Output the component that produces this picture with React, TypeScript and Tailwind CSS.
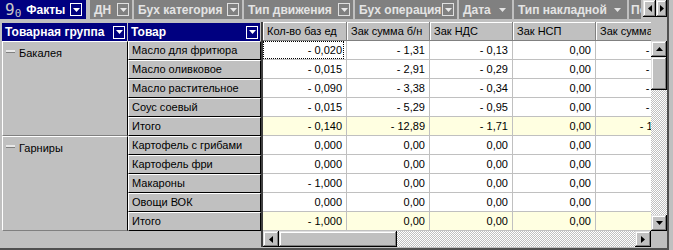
import React from "react";

type Row = { name: string; vals: string[]; total?: boolean };
type Group = { name: string; rows: Row[] };

const groups: Group[] = [
  {
    name: "Бакалея",
    rows: [
      { name: "Масло для фритюра", vals: ["- 0,020", "- 1,31", "- 0,13", "0,00", "- 1,44"] },
      { name: "Масло оливковое", vals: ["- 0,015", "- 2,91", "- 0,29", "0,00", "- 3,20"] },
      { name: "Масло растительное", vals: ["- 0,090", "- 3,38", "- 0,34", "0,00", "- 3,72"] },
      { name: "Соус соевый", vals: ["- 0,015", "- 5,29", "- 0,95", "0,00", "- 6,24"] },
      { name: "Итого", vals: ["- 0,140", "- 12,89", "- 1,71", "0,00", "- 14,60"], total: true },
    ],
  },
  {
    name: "Гарниры",
    rows: [
      { name: "Картофель с грибами", vals: ["0,000", "0,00", "0,00", "0,00", "0,00"] },
      { name: "Картофель фри", vals: ["0,000", "0,00", "0,00", "0,00", "0,00"] },
      { name: "Макароны", vals: ["- 1,000", "0,00", "0,00", "0,00", "0,00"] },
      { name: "Овощи ВОК", vals: ["0,000", "0,00", "0,00", "0,00", "0,00"] },
      { name: "Итого", vals: ["- 1,000", "0,00", "0,00", "0,00", "0,00"], total: true },
    ],
  },
];

const cols = [
  { title: "Кол-во баз ед", w: "w-[84px]" },
  { title: "Зак сумма б/н", w: "w-[83px]" },
  { title: "Зак НДС", w: "w-[83px]" },
  { title: "Зак НСП", w: "w-[83px]" },
  { title: "Зак сумма с НДС", w: "w-[83px]" },
];

const raised =
  "bg-[#c0c0c0] shadow-[inset_-1px_-1px_#000,inset_1px_1px_#dfdfdf,inset_-2px_-2px_#808080,inset_2px_2px_#fff]";
const dither =
  "bg-[repeating-conic-gradient(#c0c0c0_0_25%,#ffffff_0_50%)] bg-[length:2px_2px]";

function Tri({ dir, color = "#000" }: { dir: "up" | "down" | "left" | "right"; color?: string }) {
  if (dir === "down" || dir === "up") {
    const pts = dir === "down" ? "0,0 7,0 3.5,4" : "0,4 7,4 3.5,0";
    return (
      <svg width="7" height="4" viewBox="0 0 7 4">
        <polygon points={pts} fill={color} />
      </svg>
    );
  }
  const pts = dir === "left" ? "4,0 4,7 0,3.5" : "0,0 0,7 4,3.5";
  return (
    <svg width="4" height="7" viewBox="0 0 4 7">
      <polygon points={pts} fill={color} />
    </svg>
  );
}

function ScrollBtn({ dir }: { dir: "up" | "down" | "left" | "right" }) {
  return (
    <div className={`w-[16px] h-[16px] shrink-0 flex items-center justify-center ${raised}`}>
      <Tri dir={dir} />
    </div>
  );
}

function DropBox({ navy }: { navy?: boolean }) {
  return (
    <div
      className={`w-[12px] h-[13px] shrink-0 flex items-center justify-center border ${
        navy ? "bg-[#000080] border-white" : "bg-[#808080] border-[#e0e0e0]"
      }`}
    >
      <Tri dir="down" color={navy ? "#fff" : "#e8e8e8"} />
    </div>
  );
}

function FieldBtn({ label, w, box = true }: { label: string; w: string; box?: boolean }) {
  return (
    <div className={`${w} h-[19px] bg-[#808080] flex items-center justify-between pl-[4px] pr-[3px] shrink-0`}>
      <span className="text-[#e4e4e4] font-bold text-[12px] whitespace-nowrap">{label}</span>
      {box ? <DropBox /> : <span className="pr-[3px] flex"><Tri dir="down" color="#e4e4e4" /></span>}
    </div>
  );
}

export default function App() {
  return (
    <div className="w-[673px] h-[250px] bg-[#c0c0c0] overflow-hidden font-['Liberation_Sans',Arial,sans-serif] text-black">
      <div className="w-[669px] h-[250px] border-r-2 border-b-2 border-[#505050] flex flex-col">
        {/* field toolbar */}
        <div className="h-[19px] flex gap-[2px] overflow-hidden">
          <div className="w-[86px] h-[19px] bg-[#000080] flex items-center pl-[5px] pr-[4px] shrink-0">
            <span className="text-[#c8c8c8] text-[16px] leading-none font-['DejaVu_Sans_Mono',monospace]">9</span>
            <span className="text-[#c8c8c8] text-[11px] leading-none mt-[7px] font-['DejaVu_Sans_Mono',monospace]">0</span>
            <span className="text-white font-bold text-[12px] ml-[5px]">Факты</span>
            <div className="ml-auto"><DropBox navy /></div>
          </div>
          <div className="w-[3px]" />
          <FieldBtn label="ДН" w="w-[42px]" />
          <FieldBtn label="Бух категория" w="w-[108px]" />
          <FieldBtn label="Тип движения" w="w-[109px]" />
          <FieldBtn label="Бух операция" w="w-[102px]" />
          <FieldBtn label="Дата" w="w-[53px]" box={false} />
          <FieldBtn label="Тип накладной" w="w-[113px]" box={false} />
          <div className="w-[12px] h-[19px] bg-[#808080] overflow-hidden pl-[2px] shrink-0 flex items-center">
            <span className="text-[#e4e4e4] font-bold text-[12px]">По</span>
          </div>
          <div className="flex h-[17px] shrink-0">
            <div className={`w-[13px] h-[17px] flex items-center justify-center ${raised}`}><Tri dir="left" /></div>
            <div className={`w-[11px] h-[17px] flex items-center justify-center ${raised}`}><Tri dir="right" /></div>
          </div>
        </div>

        {/* grid */}
        <div className="mt-[3px] flex">
          {/* row headers */}
          <div className="ml-[2px] w-[259px] flex flex-col">
            <div className="h-[19px] flex gap-[1px] pt-[1px]">
              <div className="w-[125px] bg-[#000080] flex items-center justify-between pl-[3px] pr-[2px]">
                <span className="text-white font-bold text-[12px] whitespace-nowrap">Товарная группа</span>
                <DropBox navy />
              </div>
              <div className="w-[132px] bg-[#000080] flex items-center justify-between pl-[3px] pr-[2px]">
                <span className="text-white font-bold text-[12px]">Товар</span>
                <DropBox navy />
              </div>
            </div>
            {groups.map((g) => (
              <div key={g.name} className="flex">
                <div className="w-[126px] h-[95px] border-l border-t border-white border-r border-r-black border-b border-b-[#808080] flex items-start pl-[3px] pt-[2px]">
                  <div className="w-[9px] h-[3px] bg-[#e8e8e8] border-b border-[#808080] mt-[6px]" />
                  <span className="text-[11px] ml-[4px] mt-[1px]">{g.name}</span>
                </div>
                <div className="w-[133px] flex flex-col">
                  {g.rows.map((r) => (
                    <div
                      key={r.name}
                      className="h-[19px] border-l border-t border-white border-r border-r-black border-b border-b-black flex items-center pl-[3px]"
                    >
                      <span className="text-[11px] whitespace-nowrap">{r.name}</span>
                    </div>
                  ))}
                </div>
              </div>
            ))}
          </div>

          {/* data */}
          <div className="flex flex-col border-l-2 border-[#404040]">
            <div className="flex">
              <div className="w-[388px] flex flex-col overflow-hidden">
                <div className="h-[19px] flex">
                  {cols.map((c) => (
                    <div
                      key={c.title}
                      className={`${c.w} shrink-0 h-[19px] border-r border-b border-[#808080] shadow-[inset_1px_1px_#fff] flex items-center pl-[4px] text-[11px] whitespace-nowrap`}
                    >
                      {c.title}
                    </div>
                  ))}
                </div>
                {groups.flatMap((g, gi) =>
                  g.rows.map((r, ri) => (
                    <div key={g.name + r.name} className={`h-[19px] flex ${r.total ? "bg-[#ffffe1]" : "bg-white"}`}>
                      {r.vals.map((v, vi) => (
                        <div
                          key={vi}
                          className={`${cols[vi].w} shrink-0 h-[19px] border-r border-b border-[#c0c0c0] text-[11px] flex items-center justify-end`}
                        >
                          {gi === 0 && ri === 0 && vi === 0 ? (
                            <div className="w-full h-full border border-dotted border-black mr-[2px] flex items-center justify-end pr-[1px]">
                              {v}
                            </div>
                          ) : (
                            <span className="pr-[4px] whitespace-nowrap">{v}</span>
                          )}
                        </div>
                      ))}
                    </div>
                  ))
                )}
              </div>
              {/* vertical scrollbar */}
              <div className="w-[16px] flex flex-col">
                <div className="h-[19px]" />
                <div className={`h-[190px] flex flex-col ${dither}`}>
                  <ScrollBtn dir="up" />
                  <div className={`h-[33px] w-[16px] ${raised}`} />
                  <div className="flex-1" />
                  <ScrollBtn dir="down" />
                </div>
              </div>
            </div>
            {/* horizontal scrollbar */}
            <div className="flex h-[16px]">
              <div className={`w-[388px] flex ${dither}`}>
                <ScrollBtn dir="left" />
                <div className={`w-[118px] h-[16px] ${raised}`} />
                <div className="flex-1" />
                <ScrollBtn dir="right" />
              </div>
            </div>
          </div>
        </div>
      </div>
    </div>
  );
}
